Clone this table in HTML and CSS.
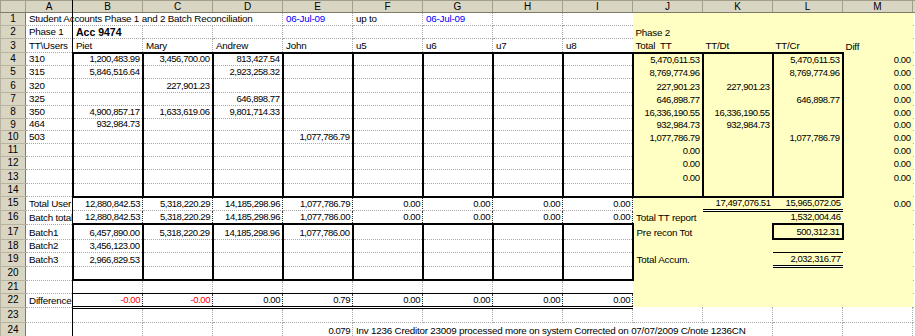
FILE: index.html
```html
<!DOCTYPE html>
<html>
<head>
<meta charset="utf-8">
<title>Student Accounts Batch Reconciliation</title>
<link rel="stylesheet" href="styles.css">
</head>
<body>
<div class="sheet">
<table class="grid">
<colgroup><col class="c-rh"><col class="c-a"><col class="c-n"><col class="c-n"><col class="c-n"><col class="c-n"><col class="c-n"><col class="c-n"><col class="c-n"><col class="c-n"><col class="c-n"><col class="c-n"><col class="c-n"><col class="c-n"><col class="c-x"></colgroup>
<thead>
<tr class="hdr"><th></th><th>A</th><th>B</th><th>C</th><th>D</th><th>E</th><th>F</th><th>G</th><th>H</th><th>I</th><th>J</th><th>K</th><th>L</th><th>M</th><th></th></tr>
</thead>
<tbody>
<tr class="h13"><th class="rh">1</th><td colspan="4">Student Accounts Phase 1 and 2 Batch Reconciliation</td><td class="b">06-Jul-09</td><td>up to</td><td class="b">06-Jul-09</td><td></td><td class="nr"></td><td class="y"></td><td class="y"></td><td class="y"></td><td class="y"></td><td class="nl"></td></tr>
<tr class="h13"><th class="rh">2</th><td>Phase 1</td><td class="bo">Acc 9474</td><td></td><td></td><td></td><td></td><td></td><td></td><td class="nr"></td><td class="y">Phase 2</td><td class="y"></td><td class="y"></td><td class="y"></td><td class="nl"></td></tr>
<tr class="h14"><th class="rh">3</th><td>TT\Users</td><td>Piet</td><td>Mary</td><td>Andrew</td><td>John</td><td>u5</td><td>u6</td><td>u7</td><td class="nr">u8</td><td class="y">Total&nbsp; TT</td><td class="y">TT/Dt</td><td class="y">TT/Cr</td><td class="y">Diff</td><td class="nl"></td></tr>
<tr class="h13"><th class="rh">4</th><td>310</td><td class="n k kt">1,200,483.99</td><td class="n k kt">3,456,700.00</td><td class="n k kt">813,427.54</td><td class="n k kt"></td><td class="n k kt"></td><td class="n k kt"></td><td class="n k kt"></td><td class="n k kt"></td><td class="y n k kt">5,470,611.53</td><td class="y n k kt"></td><td class="y n k kt">5,470,611.53</td><td class="y n">0.00</td><td class="nl"></td></tr>
<tr class="h13"><th class="rh">5</th><td>315</td><td class="n k">5,846,516.64</td><td class="n k"></td><td class="n k">2,923,258.32</td><td class="n k"></td><td class="n k"></td><td class="n k"></td><td class="n k"></td><td class="n k"></td><td class="y n k">8,769,774.96</td><td class="y n k"></td><td class="y n k">8,769,774.96</td><td class="y n">0.00</td><td class="nl"></td></tr>
<tr class="h14"><th class="rh">6</th><td>320</td><td class="n k"></td><td class="n k">227,901.23</td><td class="n k"></td><td class="n k"></td><td class="n k"></td><td class="n k"></td><td class="n k"></td><td class="n k"></td><td class="y n k">227,901.23</td><td class="y n k">227,901.23</td><td class="y n k"></td><td class="y n">0.00</td><td class="nl"></td></tr>
<tr class="h13"><th class="rh">7</th><td>325</td><td class="n k"></td><td class="n k"></td><td class="n k">646,898.77</td><td class="n k"></td><td class="n k"></td><td class="n k"></td><td class="n k"></td><td class="n k"></td><td class="y n k">646,898.77</td><td class="y n k"></td><td class="y n k">646,898.77</td><td class="y n">0.00</td><td class="nl"></td></tr>
<tr class="h13"><th class="rh">8</th><td>350</td><td class="n k">4,900,857.17</td><td class="n k">1,633,619.06</td><td class="n k">9,801,714.33</td><td class="n k"></td><td class="n k"></td><td class="n k"></td><td class="n k"></td><td class="n k"></td><td class="y n k">16,336,190.55</td><td class="y n k">16,336,190.55</td><td class="y n k"></td><td class="y n">0.00</td><td class="nl"></td></tr>
<tr class="h12"><th class="rh">9</th><td>464</td><td class="n k">932,984.73</td><td class="n k"></td><td class="n k"></td><td class="n k"></td><td class="n k"></td><td class="n k"></td><td class="n k"></td><td class="n k"></td><td class="y n k">932,984.73</td><td class="y n k">932,984.73</td><td class="y n k"></td><td class="y n">0.00</td><td class="nl"></td></tr>
<tr class="h13"><th class="rh">10</th><td>503</td><td class="n k"></td><td class="n k"></td><td class="n k"></td><td class="n k">1,077,786.79</td><td class="n k"></td><td class="n k"></td><td class="n k"></td><td class="n k"></td><td class="y n k">1,077,786.79</td><td class="y n k"></td><td class="y n k">1,077,786.79</td><td class="y n">0.00</td><td class="nl"></td></tr>
<tr class="h13"><th class="rh">11</th><td></td><td class="n k"></td><td class="n k"></td><td class="n k"></td><td class="n k"></td><td class="n k"></td><td class="n k"></td><td class="n k"></td><td class="n k"></td><td class="y n k">0.00</td><td class="y n k"></td><td class="y n k"></td><td class="y n">0.00</td><td class="nl"></td></tr>
<tr class="h13"><th class="rh">12</th><td></td><td class="n k"></td><td class="n k"></td><td class="n k"></td><td class="n k"></td><td class="n k"></td><td class="n k"></td><td class="n k"></td><td class="n k"></td><td class="y n k">0.00</td><td class="y n k"></td><td class="y n k"></td><td class="y n">0.00</td><td class="nl"></td></tr>
<tr class="h14"><th class="rh">13</th><td></td><td class="n k"></td><td class="n k"></td><td class="n k"></td><td class="n k"></td><td class="n k"></td><td class="n k"></td><td class="n k"></td><td class="n k"></td><td class="y n k">0.00</td><td class="y n k"></td><td class="y n k"></td><td class="y n">0.00</td><td class="nl"></td></tr>
<tr class="h13"><th class="rh">14</th><td></td><td class="n k kb"></td><td class="n k kb"></td><td class="n k kb"></td><td class="n k kb"></td><td class="n k kb"></td><td class="n k kb"></td><td class="n k kb"></td><td class="n k kb"></td><td class="y n k kb"></td><td class="y n k kb"></td><td class="y n k kb"></td><td class="y n"></td><td class="nl"></td></tr>
<tr class="h13"><th class="rh">15</th><td>Total User</td><td class="n h">12,880,842.53</td><td class="n h">5,318,220.29</td><td class="n h">14,185,298.96</td><td class="n h">1,077,786.79</td><td class="n h">0.00</td><td class="n h">0.00</td><td class="n h">0.00</td><td class="n h">0.00</td><td class="y"></td><td class="y n db">17,497,076.51</td><td class="y n db">15,965,072.05</td><td class="y n">0.00</td><td class="nl"></td></tr>
<tr class="h14"><th class="rh">16</th><td>Batch total</td><td class="n h">12,880,842.53</td><td class="n h">5,318,220.29</td><td class="n h">14,185,298.96</td><td class="n h">1,077,786.00</td><td class="n h">0.00</td><td class="n h">0.00</td><td class="n h">0.00</td><td class="n h">0.00</td><td class="y">Total TT report</td><td class="y"></td><td class="y n">1,532,004.46</td><td class="y"></td><td class="nl"></td></tr>
<tr class="h15"><th class="rh">17</th><td>Batch1</td><td class="n k kt">6,457,890.00</td><td class="n k kt">5,318,220.29</td><td class="n k kt">14,185,298.96</td><td class="n k kt">1,077,786.00</td><td class="n k kt"></td><td class="n k kt"></td><td class="n k kt"></td><td class="n k kt"></td><td class="y">Pre recon Tot</td><td class="y"></td><td class="y n k kt kb">500,312.31</td><td class="y"></td><td class="nl"></td></tr>
<tr class="h13"><th class="rh">18</th><td>Batch2</td><td class="n k">3,456,123.00</td><td class="n k"></td><td class="n k"></td><td class="n k"></td><td class="n k"></td><td class="n k"></td><td class="n k"></td><td class="n k"></td><td class="y"></td><td class="y"></td><td class="y"></td><td class="y"></td><td class="nl"></td></tr>
<tr class="h14"><th class="rh">19</th><td>Batch3</td><td class="n k">2,966,829.53</td><td class="n k"></td><td class="n k"></td><td class="n k"></td><td class="n k"></td><td class="n k"></td><td class="n k"></td><td class="n k"></td><td class="y">Total Accum.</td><td class="y"></td><td class="y n st db">2,032,316.77</td><td class="y"></td><td class="nl"></td></tr>
<tr class="h14"><th class="rh">20</th><td></td><td class="n k kb"></td><td class="n k kb"></td><td class="n k kb"></td><td class="n k kb"></td><td class="n k kb"></td><td class="n k kb"></td><td class="n k kb"></td><td class="n k kb"></td><td class="y"></td><td class="y"></td><td class="y"></td><td class="y"></td><td class="nl"></td></tr>
<tr class="h13"><th class="rh">21</th><td></td><td></td><td></td><td></td><td></td><td></td><td></td><td></td><td class="nr"></td><td class="y"></td><td class="y"></td><td class="y"></td><td class="y"></td><td class="nl"></td></tr>
<tr class="h14"><th class="rh">22</th><td>Difference</td><td class="n h st db r">-0.00</td><td class="n h st db r">-0.00</td><td class="n h st db">0.00</td><td class="n h st db">0.79</td><td class="n h st db">0.00</td><td class="n h st db">0.00</td><td class="n h st db">0.00</td><td class="n h st db">0.00</td><td class="y"></td><td class="y"></td><td class="y"></td><td class="y"></td><td class="nl"></td></tr>
<tr class="h15"><th class="rh">23</th><td></td><td></td><td></td><td></td><td></td><td></td><td></td><td></td><td></td><td class="nt"></td><td class="nt"></td><td class="nt"></td><td class="nt"></td><td></td></tr>
<tr class="h15"><th class="rh">24</th><td></td><td></td><td></td><td></td><td class="n">0.079</td><td colspan="6">Inv 1236 Creditor 23009 processed more on system Corrected on 07/07/2009 C/note 1236CN</td><td></td><td></td><td></td></tr>
</tbody>
</table>
<div class="freeze"></div>
</div>
</body>
</html>
```

FILE: styles.css
```css
* { box-sizing: border-box; }
html, body { margin: 0; padding: 0; background: #fff; }
body {
  font-family: "Liberation Sans", Arial, sans-serif;
  font-size: 9.8px;
  letter-spacing: -0.2px;
  color: #000;
}
.sheet {
  position: relative;
  width: 915px;
  height: 336px;
  overflow: hidden;
}
.grid {
  border-collapse: collapse;
  table-layout: fixed;
  width: 915px;
}
.c-rh { width: 25px; }
.c-a { width: 47px; }
.c-n { width: 70px; }
.c-x { width: 3px; }

.grid td {
  padding: 0 2px 1px 3px;
  line-height: 10px;
  vertical-align: bottom;
  white-space: nowrap;
  overflow: hidden;
  border: 1px dotted #a9a9a9;
}
.grid th {
  padding: 0;
  font-weight: normal;
  font-size: 10px;
  letter-spacing: 0;
  line-height: 10px;
  text-align: center;
  vertical-align: middle;
  white-space: nowrap;
  overflow: hidden;
  background: repeating-conic-gradient(#ece8d6 0 25%, #c6c2b0 0 50%) 0 0 / 2px 2px fixed;
}
.hdr { height: 12px; }
.grid .hdr th {
  border: 1px solid #a29e8a;
  border-bottom-color: #7d7a68;
}
.grid th.rh {
  border: 1px solid #b7b3a0;
  border-right-color: #7d7a68;
}

.h12 { height: 12px; }
.h13 { height: 13px; }
.h14 { height: 14px; }
.h15 { height: 15px; }

.grid td.n { text-align: right; font-size: 9.5px; letter-spacing: -0.45px; padding-right: 2px; }
.grid td.b { color: #0000ff; }
.grid td.r { color: #ff0000; }
.grid td.bo { font-weight: bold; font-size: 10.5px; letter-spacing: 0; }

.grid td.y {
  background: repeating-conic-gradient(#ffffa8 0 25%, #ffffde 0 50%) 0 0 / 2px 2px fixed;
  border-style: none;
}
.grid td.nr { border-right-style: none; }
.grid td.nl { border-left-style: none; }
.grid td.nt { border-top-style: none; }

.grid td.k { border-left: 2px solid #000; border-right: 2px solid #000; }
.grid td.kt { border-top: 2px solid #000; }
.grid td.kb { border-bottom: 2px solid #000; }
.grid td.h { border-left: 1px dotted #333; border-right: 1px dotted #333; }
.grid td.st { border-top: 1px solid #000; }
.grid td.db { border-bottom: 3px double #000; }

.freeze {
  position: absolute;
  top: 0;
  left: 72px;
  width: 1px;
  height: 336px;
  background: #000;
}
```
